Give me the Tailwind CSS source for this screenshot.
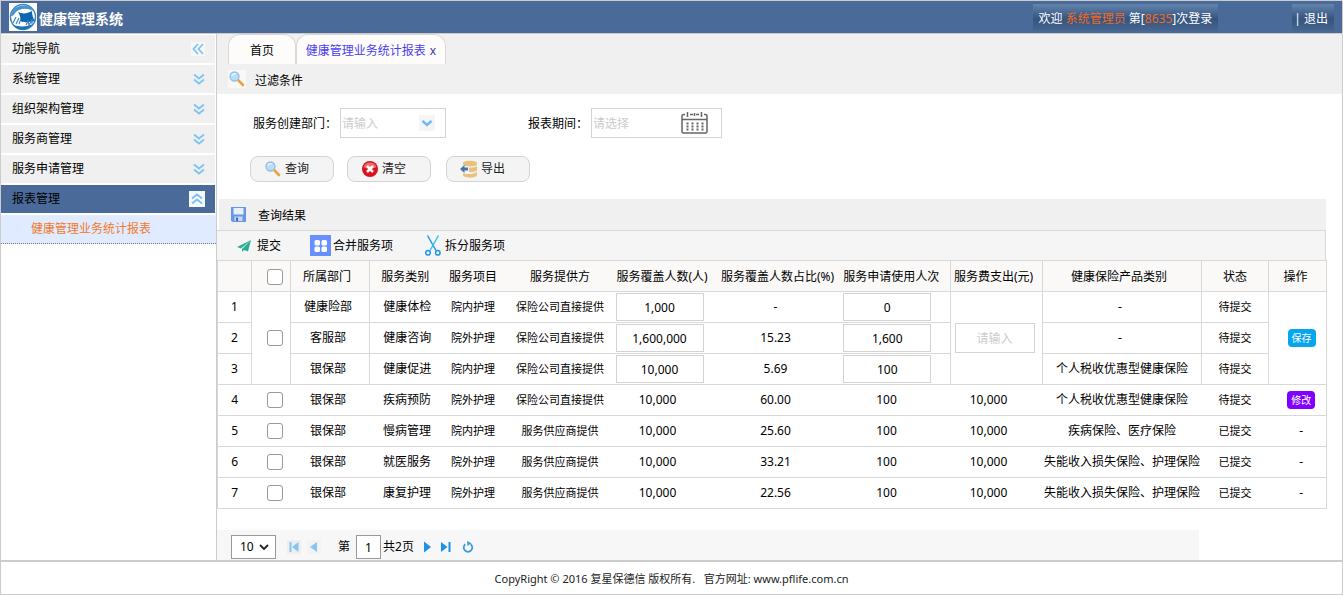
<!DOCTYPE html>
<html lang="zh-CN">
<head>
  <meta charset="UTF-8" />
  <meta name="viewport" content="width=device-width, initial-scale=1" />
  <title>健康管理系统</title>
  <script src="https://cdn.jsdelivr.net/npm/@tailwindcss/browser@4"></script>
</head>
<body class="font-['Noto_Sans','Noto_Sans_CJK_SC',sans-serif] text-xs text-black bg-white">

<!-- Symbols used more than once -->
<svg class="hidden">
  <symbol id="down" viewBox="0 0 12 12"><path d="M1 1.500l5 4 5-4M1 6.500l5 4 5-4" fill="none" stroke="#7cc4f4" stroke-width="1.800"/></symbol>
  <symbol id="search" viewBox="0 0 18 18">
    <path d="M10.500 10.500l4.500 4.500" stroke="#eda13a" stroke-width="2.600" stroke-linecap="round"/>
    <circle cx="6.500" cy="6.500" r="4.500" fill="#b5defb" stroke="#9dbbdc" stroke-width="1.300"/>
    <path d="M3.800 6a3 3 0 0 1 4.500-2" fill="none" stroke="#e8f6ff" stroke-width="1.300"/>
  </symbol>
</svg>

<div class="min-h-screen flex flex-col border border-[#ccc]">

  <!-- Header -->
  <header class="flex items-center h-[33px] px-2 bg-[#4a6b99] border-b border-[#ccc] text-white">
    <svg class="size-7 bg-white" viewBox="0 0 28 28">
      <circle cx="14" cy="14" r="12.500" fill="#fff" stroke="#3c87c4" stroke-width="1.500"/>
      <path d="M2 13C3 4 13 0 21 4l3 4C17 4 10 6 7 9c-2 2-2 4-5 4z" fill="#4b93cc"/>
      <path d="M9 9c4 2 9 2 14-1 0 4 1 7 3 10-5 1-11 2-15 0 1-3 0-6-2-9z" fill="#0f65b0"/>
      <path d="M4 20l3-6M7 21l3-6M10 21l1-3M17 22l2-4 1 4 3-5 0 4" fill="none" stroke="#3c87c4" stroke-width="1.200"/>
      <path d="M4 22c6 2 14 2 20-1-5 7-15 8-20 1z" fill="#1d72b8"/>
    </svg>
    <h1 class="ml-0.5 pt-1 text-sm font-bold">健康管理系统</h1>
    <div class="ml-auto h-[27px] flex items-center px-1.5 pt-1 bg-linear-to-b from-[#6485ae] from-0% via-[#35547f] via-55% to-[#46668f]">
      <span>欢迎 <span class="text-[#f26a21]">系统管理员</span> 第[<span class="text-[#f26a21]">8635</span>]次登录</span>
    </div>
    <div class="ml-[74px] h-[27px] flex items-center pl-0.5 pr-1.5 pt-1 bg-linear-to-b from-[#6485ae] from-0% via-[#35547f] via-55% to-[#46668f]">
      <span>|&nbsp;</span><a href="#">退出</a>
    </div>
  </header>

  <div class="flex flex-1">

    <!-- Side menu -->
    <aside class="w-[216px] shrink-0 border-r border-[#ccc]">
      <div class="flex items-center justify-between h-7 mt-px mb-0.5 mr-px pl-[11px] pr-2.5 bg-[#f0f0f0]">
        <span>功能导航</span>
        <button type="button" aria-label="收起" class="size-3.5 bg-[#f8f8f8]">
          <svg class="size-3.5" viewBox="0 0 14 14"><path d="M7 2L2.500 7 7 12M12 2L7.500 7 12 12" fill="none" stroke="#7cc4f4" stroke-width="1.800"/></svg>
        </button>
      </div>
      <nav class="flex flex-col gap-0.5">
        <a href="#" class="flex items-center justify-between h-7 mr-px pl-[11px] pr-2.5 bg-[#f0f0f0]">系统管理 <svg class="size-3"><use href="#down"/></svg></a>
        <a href="#" class="flex items-center justify-between h-7 mr-px pl-[11px] pr-2.5 bg-[#f0f0f0]">组织架构管理 <svg class="size-3"><use href="#down"/></svg></a>
        <a href="#" class="flex items-center justify-between h-7 mr-px pl-[11px] pr-2.5 bg-[#f0f0f0]">服务商管理 <svg class="size-3"><use href="#down"/></svg></a>
        <a href="#" class="flex items-center justify-between h-7 mr-px pl-[11px] pr-2.5 bg-[#f0f0f0]">服务申请管理 <svg class="size-3"><use href="#down"/></svg></a>
        <a href="#" class="flex items-center justify-between h-7 mr-px pl-[11px] pr-2.5 bg-[#4a6b99]">报表管理
          <svg class="size-4 bg-[#f5f8fb]" viewBox="0 0 16 16"><path d="M3 7.500l5-4 5 4M3 12.500l5-4 5 4" fill="none" stroke="#7cbfee" stroke-width="1.800"/></svg>
        </a>
        <a href="#" class="flex items-center h-[29px] pl-[30px] bg-[#e0ebff] border-b border-dotted border-[#777] text-[#f47a2a]">健康管理业务统计报表</a>
      </nav>
    </aside>

    <!-- Content -->
    <main class="flex-1 min-w-0 flex flex-col">

      <!-- Tabs -->
      <div class="flex h-[30px] pl-[11px] bg-[#f0f0f0]">
        <a href="#" class="flex items-center justify-center w-[68px] pt-0.5 rounded-t-xl bg-[#fdfcfb] border border-b-0 border-[#ddd6d6]">首页</a>
        <div class="flex items-center justify-center gap-1 w-[150px] pt-0.5 rounded-t-xl bg-[#fdfcfb] border border-b-0 border-[#ddd6d6] text-[#4a3ff0]">
          <a href="#">健康管理业务统计报表</a>
          <button type="button" class="text-[#4338a8] leading-4">x</button>
        </div>
      </div>

      <!-- Filter -->
      <div class="flex items-center h-[30px] pl-[11px] bg-[#f0f0f0]">
        <svg class="size-[18px] bg-[#f8f8f8]"><use href="#search"/></svg>
        <h2 class="ml-[9px] pt-1">过滤条件</h2>
      </div>
      <form class="pt-3.5 pb-[17px]">
        <div class="flex items-center pl-9">
          <label for="dept" class="w-[87px] pt-0.5">服务创建部门：</label>
          <div class="relative w-[106px]">
            <select id="dept" class="appearance-none w-full h-[30px] pl-px pt-0.5 border border-[#d3d3d3] bg-white text-[#ccc]">
              <option>请输入</option>
            </select>
            <svg class="absolute right-[11px] top-[7px] size-4 bg-[#f5f5f5] pointer-events-none" viewBox="0 0 16 16"><path d="M3.500 6L8 10l4.500-4" fill="none" stroke="#6bb8f2" stroke-width="2.400"/></svg>
          </div>
          <label for="period" class="ml-[82px] w-[63px] pt-0.5">报表期间：</label>
          <div class="flex items-center w-[131px] h-[30px] border border-[#d3d3d3]">
            <input id="period" type="text" placeholder="请选择" class="w-[89px] pl-px pt-0.5 placeholder-[#ccc] outline-none">
            <button type="button" aria-label="选择日期">
              <svg class="w-[27px] h-[22px]" viewBox="0 0 27 22" fill="none" stroke="#666" stroke-width="1.500">
                <path d="M4 2.500H2.500a1.500 1.500 0 0 0-1.500 1.500V19.500a1.500 1.500 0 0 0 1.500 1.500H24.500a1.500 1.500 0 0 0 1.500-1.500V4a1.500 1.500 0 0 0-1.500-1.500H23M9 2.500h3M15 2.500h3M1 7.500h25M6.500 0v5M13.500 1v3M20.500 0v5"/>
                <path d="M5.500 11.500h17M5.500 14.500h17M5.500 17.500h17" stroke-dasharray="2 3" stroke-width="2"/>
              </svg>
            </button>
          </div>
        </div>
        <div class="flex items-center mt-[18px] pl-[33px] text-[#222]">
          <button type="button" class="flex items-center gap-[3px] w-[84px] h-[26px] pl-[13px] rounded-lg border border-[#d3d3d3] bg-[#f4f4f4]">
            <svg class="size-[18px]"><use href="#search"/></svg>查询
          </button>
          <button type="reset" class="flex items-center gap-[3px] w-[84px] h-[26px] ml-[13px] pl-[13px] rounded-lg border border-[#d3d3d3] bg-[#f4f4f4]">
            <svg class="size-[18px]" viewBox="0 0 18 18"><circle cx="9" cy="9" r="8" fill="#d8141c"/><path d="M2.500 7a7 7 0 0 1 13 0c-4 2-9 2-13 0z" fill="#ee6a6a"/><path d="M6 6l6 6M12 6l-6 6" stroke="#fff" stroke-width="2.500"/></svg>清空
          </button>
          <button type="button" class="flex items-center gap-[3px] w-[84px] h-[26px] ml-[15px] pl-[13px] rounded-lg border border-[#d3d3d3] bg-[#f4f4f4]">
            <svg class="size-[18px]" viewBox="0 0 18 18">
              <g fill="#e8c27a"><path d="M3 3c0-3 14-3 14 0v1.500c0 2.500-14 2.500-14 0z"/><path d="M9 7.500c4 0 7-.5 8-1.500v4.500c-1 1.500-5 1.500-8 1.500z"/><path d="M3 13c3 1.500 10 1.500 14-1v3c0 3.500-14 3.500-14 0z"/></g>
              <path d="M0 9l4.500-4v2.500H8v3H4.500V13z" fill="#4076ad"/>
            </svg>导出
          </button>
        </div>
      </form>

      <!-- Results -->
      <section class="mr-4">
        <div class="flex items-center h-[31px] ml-0.5 pl-3 bg-[#f0f0f0]">
          <svg class="size-[15px]" viewBox="0 0 15 15"><path d="M0 0h15v15H1.500L0 13.500z" fill="#6596ea"/><path d="M2.500 1h10v6.500h-10z" fill="#e6effc"/><path d="M3.500 9.500h8V14h-8z" fill="#c9d8f0"/><path d="M5 10.500h2V14H5z" fill="#3f6cc4"/></svg>
          <h2 class="ml-3 pt-0.5">查询结果</h2>
        </div>
        <div class="flex items-center h-[30px] pl-5 bg-[#f5f5f5] border-t border-r border-[#d8d8d8]">
          <button type="button" class="flex items-center gap-1.5">
            <svg class="w-3.5 h-3" viewBox="0 0 14 12"><path d="M14 0L0 7l4 1.500zM14 0L5 9v3l2-2 4 1.500z" fill="#2aac93"/></svg>提交
          </button>
          <button type="button" class="flex items-center gap-0.5 ml-[29px]">
            <svg class="size-[21px]" viewBox="0 0 21 21"><path d="M0 0h21v21H0z" fill="#6690ff"/><g fill="#fff"><rect x="4.500" y="5" width="5.500" height="5.500" rx="1.500"/><rect x="11.500" y="5" width="5.500" height="5.500" rx="1.500"/><rect x="4.500" y="11.500" width="5.500" height="5.500" rx="1.500"/><rect x="11.500" y="11.500" width="5.500" height="5.500" rx="1.500"/></g></svg>合并服务项
          </button>
          <button type="button" class="flex items-center gap-1 ml-8">
            <svg class="w-4 h-[21px]" viewBox="0 0 16 21" fill="none" stroke="#2196e8" stroke-width="1.500"><path d="M2.500 0.500l8.500 15"/><path d="M13.500 0.500L5 15.500" stroke="#3cc0ee"/><circle cx="3" cy="17.800" r="2.300"/><circle cx="12.800" cy="17.800" r="2.300"/></svg>拆分服务项
          </button>
        </div>

        <table class="table-fixed w-full border-collapse border border-[#d8d8d8] text-center whitespace-nowrap [&_th]:font-normal [&_th]:p-0 [&_th]:pt-0.5 [&_td]:p-0">
          <colgroup>
            <col class="w-[34px]"><col class="w-[39px]"><col class="w-[79px]"><col class="w-[71px]">
            <col class="w-[65px]"><col class="w-[109px]"><col class="w-[90px]"><col class="w-[138px]">
            <col class="w-[108px]"><col class="w-[92px]"><col class="w-[159px]"><col class="w-[67px]"><col class="w-[58px]">
          </colgroup>
          <thead>
            <tr class="h-[31px] bg-[#faf9f8] border-b border-[#d8d8d8]">
              <th></th>
              <th class="border-l border-[#d8d8d8]"><input type="checkbox" aria-label="全选" class="appearance-none block size-4 mx-auto translate-x-1 rounded-[3px] border border-[#999] bg-white checked:bg-[#4a6b99]"></th>
              <th class="border-l border-[#d8d8d8]"><div class="pr-1.5">所属部门</div></th>
              <th class="border-l border-[#d8d8d8]">服务类别</th>
              <th>服务项目</th>
              <th>服务提供方</th>
              <th><div class="pl-0.5">服务覆盖人数(人)</div></th>
              <th><div class="pl-2">服务覆盖人数占比(%)</div></th>
              <th><div class="pr-2.5">服务申请使用人次</div></th>
              <th class="border-l border-[#d8d8d8]"><div class="pr-1.5">服务费支出(元)</div></th>
              <th class="border-l border-[#d8d8d8]"><div class="pr-1.5">健康保险产品类别</div></th>
              <th class="border-l border-[#d8d8d8]">状态</th>
              <th class="border-l border-[#d8d8d8]"><div class="pr-1">操作</div></th>
            </tr>
          </thead>
          <tbody>
            <tr class="h-[31px] border-b border-[#d8d8d8]">
              <td>1</td>
              <td rowspan="3" class="border-l border-[#d8d8d8]"><input type="checkbox" aria-label="选择 1-3" class="appearance-none block size-4 mx-auto translate-x-1 rounded-[3px] border border-[#999] bg-white checked:bg-[#4a6b99]"></td>
              <td class="border-l border-[#d8d8d8]"><div class="pr-1">健康险部</div></td>
              <td class="border-l border-[#d8d8d8]"><div class="pl-1">健康体检</div></td>
              <td class="text-[11px]">院内护理</td>
              <td class="text-[11px]">保险公司直接提供</td>
              <td><input type="text" value="1,000" aria-label="服务覆盖人数 1" class="block w-[88px] h-7 mx-auto border border-[#d3d3d3] text-center"></td>
              <td><div class="pl-1">-</div></td>
              <td><div class="pr-4.5"><input type="text" value="0" aria-label="使用人次 1" class="block w-[88px] h-7 mx-auto border border-[#d3d3d3] text-center"></div></td>
              <td rowspan="3" class="border-l border-[#d8d8d8]"><div class="pr-1"><input type="text" placeholder="请输入" aria-label="服务费支出" class="block w-20 h-[30px] mx-auto border border-[#d3d3d3] placeholder-[#ccc] text-center"></div></td>
              <td class="border-l border-[#d8d8d8]"><div class="pr-1">-</div></td>
              <td class="border-l border-[#d8d8d8] text-[11px]">待提交</td>
              <td rowspan="3" class="border-l border-[#d8d8d8]"><div class="pl-2"><button type="button" class="w-7 h-[18px] rounded bg-[#05a5f0] text-white text-[10px] leading-[18px]">保存</button></div></td>
            </tr>
            <tr class="h-[31px] border-b border-[#d8d8d8]">
              <td>2</td>
              <td class="border-l border-[#d8d8d8]"><div class="pr-1">客服部</div></td>
              <td class="border-l border-[#d8d8d8]"><div class="pl-1">健康咨询</div></td>
              <td class="text-[11px]">院外护理</td>
              <td class="text-[11px]">保险公司直接提供</td>
              <td><input type="text" value="1,600,000" aria-label="服务覆盖人数 2" class="block w-[88px] h-7 mx-auto border border-[#d3d3d3] text-center"></td>
              <td><div class="pl-1">15.23</div></td>
              <td><div class="pr-4.5"><input type="text" value="1,600" aria-label="使用人次 2" class="block w-[88px] h-7 mx-auto border border-[#d3d3d3] text-center"></div></td>
              <td class="border-l border-[#d8d8d8]"><div class="pr-1">-</div></td>
              <td class="border-l border-[#d8d8d8] text-[11px]">待提交</td>
            </tr>
            <tr class="h-[31px] border-b border-[#d8d8d8]">
              <td>3</td>
              <td class="border-l border-[#d8d8d8]"><div class="pr-1">银保部</div></td>
              <td class="border-l border-[#d8d8d8]"><div class="pl-1">健康促进</div></td>
              <td class="text-[11px]">院内护理</td>
              <td class="text-[11px]">保险公司直接提供</td>
              <td><input type="text" value="10,000" aria-label="服务覆盖人数 3" class="block w-[88px] h-7 mx-auto border border-[#d3d3d3] text-center"></td>
              <td><div class="pl-1">5.69</div></td>
              <td><div class="pr-4.5"><input type="text" value="100" aria-label="使用人次 3" class="block w-[88px] h-7 mx-auto border border-[#d3d3d3] text-center"></div></td>
              <td class="border-l border-[#d8d8d8]">个人税收优惠型健康保险</td>
              <td class="border-l border-[#d8d8d8] text-[11px]">待提交</td>
            </tr>
            <tr class="h-[31px] border-b border-[#d8d8d8]">
              <td>4</td>
              <td><input type="checkbox" aria-label="选择 4" class="appearance-none block size-4 mx-auto translate-x-1 rounded-[3px] border border-[#999] bg-white checked:bg-[#4a6b99]"></td>
              <td><div class="pr-1">银保部</div></td>
              <td><div class="pl-1">疾病预防</div></td>
              <td class="text-[11px]">院外护理</td>
              <td class="text-[11px]">保险公司直接提供</td>
              <td><div class="pr-1">10,000</div></td>
              <td><div class="pl-1">60.00</div></td>
              <td><div class="pr-5">100</div></td>
              <td><div class="pr-4">10,000</div></td>
              <td>个人税收优惠型健康保险</td>
              <td class="text-[11px]">待提交</td>
              <td><div class="pl-2"><button type="button" class="block mx-auto w-7 h-[18px] rounded bg-[#8000ff] text-white text-[10px] leading-[18px]">修改</button></div></td>
            </tr>
            <tr class="h-[31px] border-b border-[#d8d8d8]">
              <td>5</td>
              <td><input type="checkbox" aria-label="选择 5" class="appearance-none block size-4 mx-auto translate-x-1 rounded-[3px] border border-[#999] bg-white checked:bg-[#4a6b99]"></td>
              <td><div class="pr-1">银保部</div></td>
              <td><div class="pl-1">慢病管理</div></td>
              <td class="text-[11px]">院内护理</td>
              <td class="text-[11px]">服务供应商提供</td>
              <td><div class="pr-1">10,000</div></td>
              <td><div class="pl-1">25.60</div></td>
              <td><div class="pr-5">100</div></td>
              <td><div class="pr-4">10,000</div></td>
              <td>疾病保险、医疗保险</td>
              <td class="text-[11px]">已提交</td>
              <td><div class="pl-2">-</div></td>
            </tr>
            <tr class="h-[31px] border-b border-[#d8d8d8]">
              <td>6</td>
              <td><input type="checkbox" aria-label="选择 6" class="appearance-none block size-4 mx-auto translate-x-1 rounded-[3px] border border-[#999] bg-white checked:bg-[#4a6b99]"></td>
              <td><div class="pr-1">银保部</div></td>
              <td><div class="pl-1">就医服务</div></td>
              <td class="text-[11px]">院外护理</td>
              <td class="text-[11px]">服务供应商提供</td>
              <td><div class="pr-1">10,000</div></td>
              <td><div class="pl-1">33.21</div></td>
              <td><div class="pr-5">100</div></td>
              <td><div class="pr-4">10,000</div></td>
              <td>失能收入损失保险、护理保险</td>
              <td class="text-[11px]">已提交</td>
              <td><div class="pl-2">-</div></td>
            </tr>
            <tr class="h-[31px]">
              <td>7</td>
              <td><input type="checkbox" aria-label="选择 7" class="appearance-none block size-4 mx-auto translate-x-1 rounded-[3px] border border-[#999] bg-white checked:bg-[#4a6b99]"></td>
              <td><div class="pr-1">银保部</div></td>
              <td><div class="pl-1">康复护理</div></td>
              <td class="text-[11px]">院外护理</td>
              <td class="text-[11px]">服务供应商提供</td>
              <td><div class="pr-1">10,000</div></td>
              <td><div class="pl-1">22.56</div></td>
              <td><div class="pr-5">100</div></td>
              <td><div class="pr-4">10,000</div></td>
              <td>失能收入损失保险、护理保险</td>
              <td class="text-[11px]">已提交</td>
              <td><div class="pl-2">-</div></td>
            </tr>
          </tbody>
        </table>
      </section>

      <!-- Pagination -->
      <div class="flex items-center h-[30px] mt-auto mr-[143px] pl-3.5 pt-1 bg-[#f7f7f7]">
        <div class="relative">
          <select aria-label="每页条数" class="appearance-none w-[45px] h-6 pl-2 border border-[#999] bg-white"><option>10</option></select>
          <svg class="absolute right-[7px] top-[7px] size-2.5 pointer-events-none" viewBox="0 0 10 10"><path d="M1 3l4 4 4-4" fill="none" stroke="#222" stroke-width="1.800"/></svg>
        </div>
        <button type="button" aria-label="首页" class="ml-[11px] p-px bg-[#eee]"><svg class="size-3" viewBox="0 0 12 12" fill="#86c5f2"><path d="M1.500 1h2v10h-2zM10.500 1v10L4 6z"/></svg></button>
        <button type="button" aria-label="上一页" class="ml-1.5 p-px bg-[#f3f3f3]"><svg class="size-3" viewBox="0 0 12 12" fill="#86c5f2"><path d="M9 1v10L2 6z"/></svg></button>
        <label for="page" class="ml-[17px] mr-1.5">第</label>
        <input id="page" type="text" value="1" class="w-[25px] h-6 border border-[#999] bg-white text-center">
        <span class="ml-0.5">共2页</span>
        <button type="button" aria-label="下一页" class="ml-1.5 p-px"><svg class="size-3" viewBox="0 0 12 12" fill="#1a92ea"><path d="M3 0.500v11L10 6z"/></svg></button>
        <button type="button" aria-label="末页" class="ml-[5px] p-px"><svg class="size-3" viewBox="0 0 12 12" fill="#1a92ea"><path d="M1 1v10l6.500-5zM8.500 1h2v10h-2z"/></svg></button>
        <button type="button" aria-label="刷新" class="ml-2 p-px"><svg class="size-3" viewBox="0 0 12 12"><path d="M3.300 3.200A4.300 4.300 0 1 0 8.700 3.200" fill="none" stroke="#3a9be0" stroke-width="1.800"/><path d="M5 0l4.500 2.200L5.500 5z" fill="#3a9be0"/></svg></button>
      </div>
    </main>
  </div>

  <footer class="flex items-center justify-center h-[34px] pt-0.5 border-t-2 border-[#ccc] text-[11px] text-[#222]">
    <p>CopyRight © 2016 复星保德信 版权所有.&nbsp;&nbsp; 官方网址: www.pflife.com.cn</p>
  </footer>
</div>

</body>
</html>
